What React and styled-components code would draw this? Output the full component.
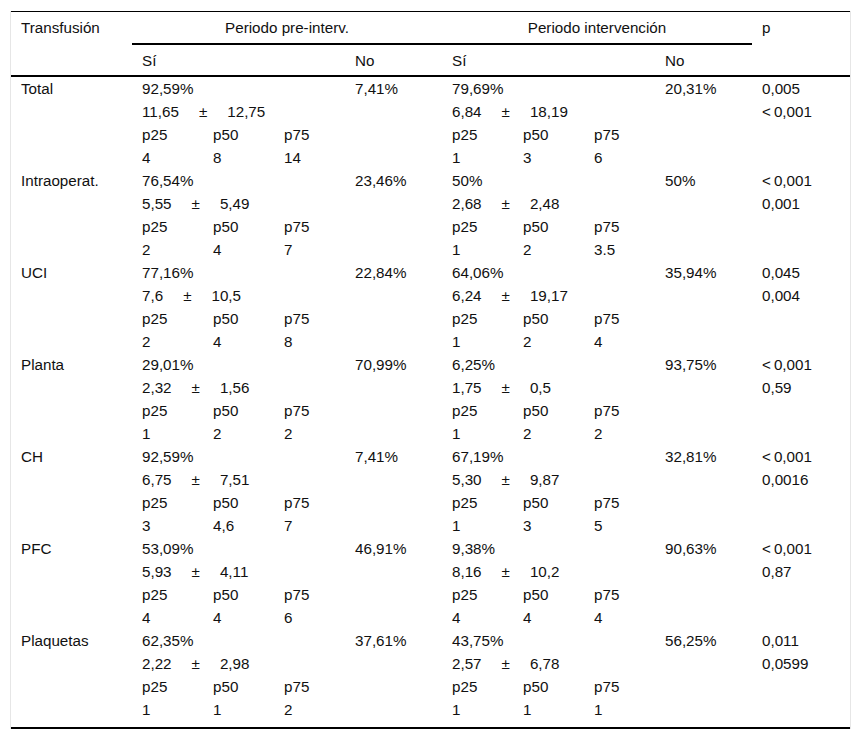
import React from 'react';
import styled, { createGlobalStyle } from 'styled-components';

const GlobalStyle = createGlobalStyle`
  body {
    margin: 0;
    background: #fff;
    font-family: "Liberation Sans", Arial, sans-serif;
    font-size: 15.2px;
    line-height: 23px;
    color: #111;
  }
`;

const COLS = '121px 213px 97px 213px 97px 98px';

const Frame = styled.div`
  margin: 11px 0 0 10px;
  width: 839px;
  border-left: 1px solid #e6e6e6;
  border-right: 1px solid #e6e6e6;
`;

const Table = styled.div`
  border-top: 1px solid #000;
  border-bottom: 2px solid #000;
`;

const Head = styled.div`
  display: grid;
  grid-template-columns: ${COLS};
  border-bottom: 2px solid #000;
`;

const HeadCell = styled.div`
  grid-column: ${p => p.$col};
  grid-row: ${p => p.$row};
  padding: ${p => (p.$sub ? '4px 10px 3px' : '4px 10px')};
  text-align: ${p => (p.$center ? 'center' : 'left')};
  border-bottom: ${p => (p.$rule ? '2px solid #000' : 'none')};
`;

const Body = styled.div`
  padding-bottom: 6px;
`;

const Group = styled.div`
  display: grid;
  grid-template-columns: ${COLS};
  align-items: start;
`;

const Cell = styled.div`
  padding: 0 10px;
`;

const Stack = styled.div`
  display: flex;
  flex-direction: column;
`;

const Line = styled.div`
  padding: 0 10px;
`;

const MeanRow = styled.div`
  display: flex;
`;

const MeanPart = styled.span`
  padding: 0 10px;
`;

const Quartiles = styled.div`
  display: grid;
  grid-template-columns: repeat(3, 1fr);
`;

const Stats = ({ pct, mean, sd, q }) => (
  <Stack>
    <Line>{pct}</Line>
    <MeanRow>
      <MeanPart>{mean}</MeanPart>
      <MeanPart>±</MeanPart>
      <MeanPart>{sd}</MeanPart>
    </MeanRow>
    <Quartiles>
      <Line>p25</Line>
      <Line>p50</Line>
      <Line>p75</Line>
      {q.map((v, i) => (
        <Line key={i}>{v}</Line>
      ))}
    </Quartiles>
  </Stack>
);

const LT = '<\u2009';

const rows = [
  {
    label: 'Total',
    pre: { pct: '92,59%', mean: '11,65', sd: '12,75', q: ['4', '8', '14'] },
    preNo: '7,41%',
    int: { pct: '79,69%', mean: '6,84', sd: '18,19', q: ['1', '3', '6'] },
    intNo: '20,31%',
    p: ['0,005', LT + '0,001'],
  },
  {
    label: 'Intraoperat.',
    pre: { pct: '76,54%', mean: '5,55', sd: '5,49', q: ['2', '4', '7'] },
    preNo: '23,46%',
    int: { pct: '50%', mean: '2,68', sd: '2,48', q: ['1', '2', '3.5'] },
    intNo: '50%',
    p: [LT + '0,001', '0,001'],
  },
  {
    label: 'UCI',
    pre: { pct: '77,16%', mean: '7,6', sd: '10,5', q: ['2', '4', '8'] },
    preNo: '22,84%',
    int: { pct: '64,06%', mean: '6,24', sd: '19,17', q: ['1', '2', '4'] },
    intNo: '35,94%',
    p: ['0,045', '0,004'],
  },
  {
    label: 'Planta',
    pre: { pct: '29,01%', mean: '2,32', sd: '1,56', q: ['1', '2', '2'] },
    preNo: '70,99%',
    int: { pct: '6,25%', mean: '1,75', sd: '0,5', q: ['1', '2', '2'] },
    intNo: '93,75%',
    p: [LT + '0,001', '0,59'],
  },
  {
    label: 'CH',
    pre: { pct: '92,59%', mean: '6,75', sd: '7,51', q: ['3', '4,6', '7'] },
    preNo: '7,41%',
    int: { pct: '67,19%', mean: '5,30', sd: '9,87', q: ['1', '3', '5'] },
    intNo: '32,81%',
    p: [LT + '0,001', '0,0016'],
  },
  {
    label: 'PFC',
    pre: { pct: '53,09%', mean: '5,93', sd: '4,11', q: ['4', '4', '6'] },
    preNo: '46,91%',
    int: { pct: '9,38%', mean: '8,16', sd: '10,2', q: ['4', '4', '4'] },
    intNo: '90,63%',
    p: [LT + '0,001', '0,87'],
  },
  {
    label: 'Plaquetas',
    pre: { pct: '62,35%', mean: '2,22', sd: '2,98', q: ['1', '1', '2'] },
    preNo: '37,61%',
    int: { pct: '43,75%', mean: '2,57', sd: '6,78', q: ['1', '1', '1'] },
    intNo: '56,25%',
    p: ['0,011', '0,0599'],
  },
];

export default function App() {
  return (
    <>
      <GlobalStyle />
      <Frame>
        <Table>
          <Head>
            <HeadCell $col="1" $row="1 / 3">Transfusión</HeadCell>
            <HeadCell $col="2 / 4" $row="1" $center $rule>Periodo pre-interv.</HeadCell>
            <HeadCell $col="4 / 6" $row="1" $center $rule>Periodo intervención</HeadCell>
            <HeadCell $col="6" $row="1 / 3">p</HeadCell>
            <HeadCell $col="2" $row="2" $sub>Sí</HeadCell>
            <HeadCell $col="3" $row="2" $sub>No</HeadCell>
            <HeadCell $col="4" $row="2" $sub>Sí</HeadCell>
            <HeadCell $col="5" $row="2" $sub>No</HeadCell>
          </Head>
          <Body>
            {rows.map(r => (
              <Group key={r.label}>
                <Cell>{r.label}</Cell>
                <Stats {...r.pre} />
                <Cell>{r.preNo}</Cell>
                <Stats {...r.int} />
                <Cell>{r.intNo}</Cell>
                <Cell>
                  {r.p.map(v => (
                    <div key={v}>{v}</div>
                  ))}
                </Cell>
              </Group>
            ))}
          </Body>
        </Table>
      </Frame>
    </>
  );
}
